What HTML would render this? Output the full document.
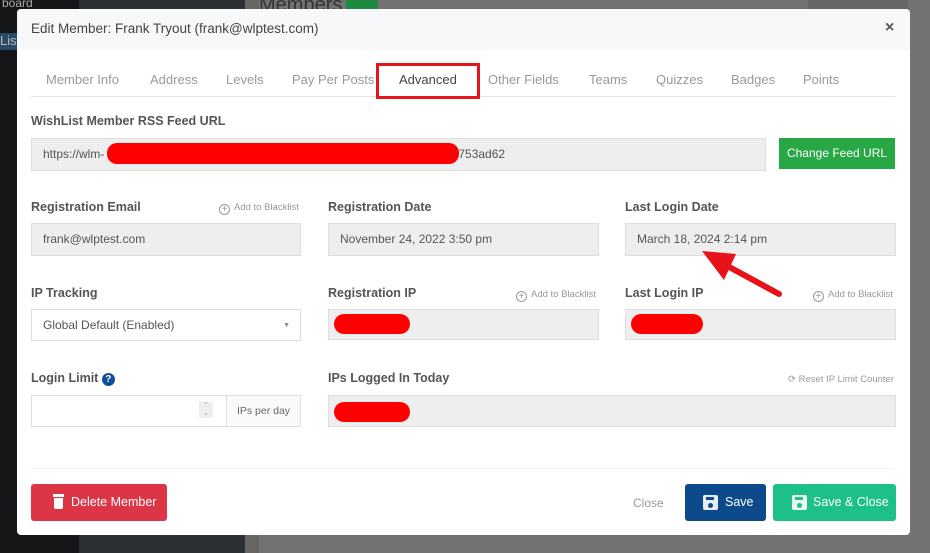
<!DOCTYPE html><html><head><style>
*{margin:0;padding:0;box-sizing:border-box}
body{width:930px;height:553px;position:relative;overflow:hidden;background:#727272;font-family:"Liberation Sans",sans-serif;font-size:12px;color:#444}
.a{position:absolute}
.lbl{position:absolute;font-size:12.5px;font-weight:bold;color:#555}
.inp{position:absolute;background:#eeeeee;border:1px solid #dedede;height:33px;padding-left:11px;line-height:31px;font-size:12px;color:#555}
.bl{position:absolute;font-size:9.5px;color:#999}
.bl i{display:inline-block;width:11px;height:11px;border:1px solid #999;border-radius:50%;font-style:normal;text-align:center;line-height:9px;font-size:10px;margin-right:4px;vertical-align:-2px}
.red{position:absolute;background:#f00;border-radius:10px;height:20px}
.tab{position:absolute;top:63px;font-size:13px;color:#999}
</style></head><body>
<div class="a" style="left:0;top:0;width:79px;height:553px;background:#141618"></div>
<div class="a" style="left:0;top:33px;width:17px;height:17px;background:#2a4a66"></div>
<div class="a" style="left:79px;top:0;width:166px;height:553px;background:#2b2e33"></div>
<div class="a" style="left:245px;top:0;width:14px;height:553px;background:#666"></div>
<div class="a" style="left:259px;top:0;font-size:20px;color:#333;top:-6px">Members</div>
<div class="a" style="left:346px;top:0;width:32px;height:9px;background:#1d8a3f"></div>
<div class="a" style="left:808px;top:0;width:100px;height:9px;background:#666"></div>
<div class="a" style="left:2px;top:0;color:#aaa;font-size:12px;top:-4px">board</div>
<div class="a" style="left:0;top:33px;color:#bbb;font-size:13px">List</div>
<div class="a" style="left:17px;top:9px;width:893px;height:526px;background:#fff;border-radius:4px;overflow:hidden">
 <div class="a" style="left:0;top:0;width:893px;height:41px;background:#f7f8fa"></div>
 <div class="a" style="left:14px;top:12px;font-size:13.5px;color:#444">Edit Member: Frank Tryout (frank@wlptest.com)</div>
 <div class="a" style="left:868px;top:10px;font-size:16px;color:#555;font-weight:bold">×</div>
 <div class="a" style="left:14px;top:87px;width:864px;height:1px;background:#e4e4e4"></div>
 <div class="tab" style="left:29px">Member Info</div>
 <div class="tab" style="left:133px">Address</div>
 <div class="tab" style="left:209px">Levels</div>
 <div class="tab" style="left:275px">Pay Per Posts</div>
 <div class="a" style="left:359px;top:54px;width:104px;height:36px;border:3px solid #e4151b"></div>
 <div class="tab" style="left:382px;color:#444">Advanced</div>
 <div class="tab" style="left:471px">Other Fields</div>
 <div class="tab" style="left:572px">Teams</div>
 <div class="tab" style="left:639px">Quizzes</div>
 <div class="tab" style="left:714px">Badges</div>
 <div class="tab" style="left:786px">Points</div>

 <div class="lbl" style="left:14px;top:105px">WishList Member RSS Feed URL</div>
 <div class="inp" style="left:14px;top:129px;width:735px">https://wlm-<span style="display:inline-block;width:354px"></span>753ad62</div>
 <div class="red" style="left:90px;top:134px;width:352px;height:21px"></div>
 <div class="a" style="left:762px;top:129px;width:116px;height:31px;background:#28a745;color:#fff;font-size:12px;text-align:center;line-height:31px">Change Feed URL</div>

 <div class="lbl" style="left:14px;top:191px">Registration Email</div>
 <div class="bl" style="left:202px;top:193px"><i>+</i>Add to Blacklist</div>
 <div class="inp" style="left:14px;top:214px;width:270px">frank@wlptest.com</div>
 <div class="lbl" style="left:311px;top:191px">Registration Date</div>
 <div class="inp" style="left:311px;top:214px;width:271px">November 24, 2022 3:50 pm</div>
 <div class="lbl" style="left:608px;top:191px">Last Login Date</div>
 <div class="inp" style="left:608px;top:214px;width:271px">March 18, 2024 2:14 pm</div>

 <div class="lbl" style="left:14px;top:277px">IP Tracking</div>
 <div class="inp" style="left:14px;top:300px;width:270px;height:32px;background:#fff">Global Default (Enabled)<span style="position:absolute;right:10px;top:0;font-size:7px;color:#888">▼</span></div>
 <div class="lbl" style="left:311px;top:277px">Registration IP</div>
 <div class="bl" style="left:499px;top:280px"><i>+</i>Add to Blacklist</div>
 <div class="inp" style="left:311px;top:300px;width:271px;height:31px"></div>
 <div class="red" style="left:317px;top:305px;width:76px"></div>
 <div class="lbl" style="left:608px;top:277px">Last Login IP</div>
 <div class="bl" style="left:796px;top:280px"><i>+</i>Add to Blacklist</div>
 <div class="inp" style="left:608px;top:300px;width:271px;height:31px"></div>
 <div class="red" style="left:614px;top:305px;width:72px"></div>

 <div class="lbl" style="left:14px;top:362px">Login Limit <span style="display:inline-block;width:13px;height:13px;border-radius:50%;background:#0c4f9c;color:#fff;font-size:10px;text-align:center;line-height:13px">?</span></div>
 <div class="a" style="left:14px;top:386px;width:270px;height:32px;border:1px solid #dedede"></div>
 <div class="a" style="left:182px;top:393px;width:14px;height:16px;background:#eee;font-size:7px;color:#999;text-align:center;line-height:8px">⌃<br>⌄</div>
 <div class="a" style="left:209px;top:386px;width:75px;height:32px;border:1px solid #dedede;background:#fafafa;font-size:10.5px;color:#666;text-align:center;line-height:30px">IPs per day</div>
 <div class="lbl" style="left:311px;top:362px">IPs Logged In Today</div>
 <div class="bl" style="left:771px;top:365px">⟳ Reset IP Limit Counter</div>
 <div class="inp" style="left:311px;top:386px;width:568px;height:32px"></div>
 <div class="red" style="left:317px;top:393px;width:76px"></div>

 <div class="a" style="left:14px;top:459px;width:864px;height:1px;background:#f2f2f2"></div>
 <div class="a" style="left:14px;top:475px;width:136px;height:37px;background:#dc3545;border-radius:3px;color:#fff;font-size:12.5px;line-height:37px;padding-left:40px">Delete Member</div>
 <div class="a" style="left:36px;top:485px;width:11px;height:3px;background:#fff"></div>
 <div class="a" style="left:37px;top:489px;width:9px;height:11px;background:#fff;border-radius:0 0 2px 2px"></div>
 <div class="a" style="left:616px;top:487px;font-size:12px;color:#999">Close</div>
 <div class="a" style="left:668px;top:475px;width:81px;height:37px;background:#0c4a8c;border-radius:3px;color:#fff;font-size:12.5px;line-height:37px;padding-left:40px">Save</div>
 <div class="a" style="left:756px;top:475px;width:123px;height:37px;background:#1dc087;border-radius:3px;color:#fff;font-size:12.5px;line-height:37px;padding-left:40px">Save &amp; Close</div>
 <div class="a" style="left:686px;top:486px;width:15px;height:15px;background:#e8edf3;border-radius:2px"><div class="a" style="left:3px;top:2px;width:8px;height:3px;background:#0c4a8c"></div><div class="a" style="left:5px;top:8px;width:5px;height:5px;border-radius:50%;background:#0c4a8c"></div></div>
 <div class="a" style="left:775px;top:486px;width:15px;height:15px;background:#eafaf3;border-radius:2px"><div class="a" style="left:3px;top:2px;width:8px;height:3px;background:#1dc087"></div><div class="a" style="left:5px;top:8px;width:5px;height:5px;border-radius:50%;background:#1dc087"></div></div>
</div>
<svg class="a" style="left:690px;top:240px" width="100" height="60"><line x1="89" y1="54" x2="30" y2="22" stroke="#e8131a" stroke-width="6" stroke-linecap="round"/><polygon points="12,11 46,14 34,40" fill="#e8131a"/></svg>
</body></html>
